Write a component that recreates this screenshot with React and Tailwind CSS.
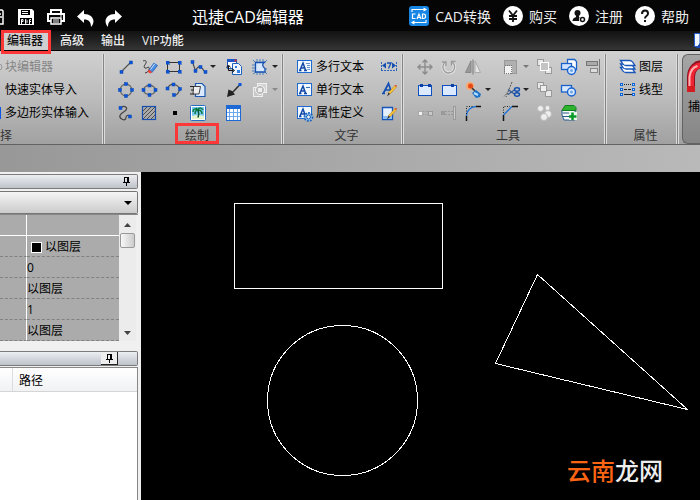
import React from 'react';

const BLUE = '#0a55d8';

function Icon({ children, crisp }) {
  return (
    <svg width="20" height="20" viewBox="0 0 20 20" fill="none" className="block shrink-0" shapeRendering={crisp ? 'crispEdges' : 'auto'} aria-hidden="true">
      {children}
    </svg>
  );
}

function Nodes({ at }) {
  return at.map(([x, y]) => (
    <rect key={`${x}-${y}`} x={x - 1.5} y={y - 1.5} width="3" height="3" fill={BLUE} stroke="#0846b8" strokeWidth=".5" />
  ));
}

function Caret({ color = '#222' }) {
  return (
    <svg width="6" height="3" viewBox="0 0 6 3" className="ml-0.5 block shrink-0" aria-hidden="true">
      <path d="M0 0h6L3 3z" fill={color} />
    </svg>
  );
}

/* ---------- draw group ---------- */
const LineIcon = () => (
  <Icon><path d="M5 15L15 5" stroke="#555" strokeWidth="1.3" /><Nodes at={[[5.5, 15], [15, 5.5]]} /></Icon>
);
const SketchIcon = () => (
  <Icon>
    <path d="M3 4c2-1 4 0 3 2s-3 4-1 5 3-2 4-.5-1 5-4 5.500" stroke="#333" strokeWidth="1" />
    <path d="M9 13l5-7 3.500 2.500-5.500 7z" fill="#4a8ce0" stroke="#1b58b8" strokeWidth=".7" />
    <path d="M9 12.500l3 2.500-1.500 1.500-3-1.500z" fill="#f04438" />
    <path d="M10.500 12.500l4.500-6" stroke="#cfe4ff" />
  </Icon>
);
const RectIcon = () => (
  <Icon crisp><path d="M3.500 5.500h12v9h-12z" stroke="#333" /><Nodes at={[[3.5, 5.5], [15.5, 5.5], [3.5, 14.5], [15.5, 14.5]]} /></Icon>
);
const PolyIcon = () => (
  <Icon><path d="M4.500 5l3 9q2-5 4.500-4t5 5" stroke="#444" strokeWidth="1.100" /><Nodes at={[[4.5, 5], [7.5, 14], [12.5, 10], [17.5, 15]]} /></Icon>
);
const BlockIcon = () => (
  <Icon>
    <rect x="3.500" y="2.500" width="9" height="9" fill="#fff" stroke="#1c56a8" /><rect x="3" y="2" width="10" height="3" fill="#1c56c8" />
    <rect x="10.500" y="2.500" width="2" height="2" fill="#e03030" />
    <path d="M8.500 6.500h6l3 3v8H8.500z" fill="#eef5ff" stroke="#1e62c0" />
    <path d="M11 9h2v2h-2zM13 13h3v3h-3z" fill="#357de0" />
    <path d="M4.500 9v4.500h5M2.500 10.500l2-2.500 2 2.500M8 11.500l2.500 2L8 15.500" stroke="#111" />
  </Icon>
);
const RegionIcon = () => (
  <Icon>
    <path d="M3 3l3 3m1-4v3m3-3v3m3-3v3m4-2l-3 3M2 8h3m-3 3h3m-3 3h3m-2 3l3-2m1 0v3m3-3v3m3-3v3m4-1l-3-3m0-2h3m-4-7h3" stroke="#2d6fc0" strokeWidth=".8" />
    <path d="M5.500 5.500H14q-3 3 1 6v3.500H5.500z" fill="#d8e8ff" stroke="#1450b0" strokeWidth="1.300" />
  </Icon>
);
const CircleIcon = () => (
  <Icon><circle cx="10" cy="10" r="5.800" stroke="#666" strokeWidth="1.300" /><Nodes at={[[10, 4], [4, 10], [16, 10], [10, 16]]} /></Icon>
);
const EllipseIcon = () => (
  <Icon><ellipse cx="9.500" cy="10" rx="6" ry="4.500" stroke="#666" strokeWidth="1.300" /><Nodes at={[[9.5, 5.5], [3.5, 10], [15.5, 10], [9.5, 15]]} /></Icon>
);
const ArcIcon = () => (
  <Icon><path d="M3.500 8.500C5 5 7 4 10 4.500s7 3 5 7-4 4-5 4" stroke="#555" strokeWidth="1.200" /><Nodes at={[[3.5, 8.5], [9.5, 4.5], [16, 9], [10, 15]]} /></Icon>
);
const PasteIcon = () => (
  <Icon>
    <path d="M7.500 3.500h6.500l3 3v10H7.500z" fill="#dceaff" stroke="#1b57b0" strokeWidth="1.200" />
    <path d="M5.500 6.500h7l-1.500 7.500H5z" fill="#eee" stroke="#444" /><path d="M2 6.500h4M3 10h3m-4 4h4" stroke="#222" />
  </Icon>
);
const ArrowIcon = () => (
  <Icon><path d="M16.500 4L7 14" stroke="#333" strokeWidth="1.600" /><path d="M3 17L4.500 9.500 8 11 11 14.500z" fill="#222" /><rect x="14.500" y="3" width="3" height="3" fill={BLUE} /></Icon>
);
const WipeIcon = () => (
  <Icon>
    <rect x="7.500" y="3.500" width="9" height="9" fill="#d4d4d4" stroke="#f0f0f0" /><rect x="3.500" y="7.500" width="9" height="9" fill="#c8c8c8" stroke="#eee" />
    <circle cx="10" cy="10" r="4.500" fill="#bbb" stroke="#f5f5f5" /><rect x="8" y="8" width="4" height="4" fill="#eee" />
  </Icon>
);
const SplineIcon = () => (
  <Icon><path d="M5 4.500c4-3 8 1 4 3.500s-7 5-4 7.500 5 1 5-1 2-3 4-1" stroke="#444" strokeWidth="1.200" /><Nodes at={[[4.500, 5], [14, 13.500]]} /></Icon>
);
const HatchIcon = () => (
  <Icon>
    <rect x="2.500" y="3.500" width="13" height="13" fill="#aaa" stroke="#174fb0" strokeWidth="1.200" />
    <path d="M3 8l4-4M3 12l8-8M3 16L15 4M7 16l8-8M11 16l4-4" stroke="#444" strokeWidth=".9" />
  </Icon>
);
const PointIcon = () => <Icon crisp><rect x="9" y="8" width="4" height="4" fill="#000" /></Icon>;
const ImageIcon = () => (
  <Icon>
    <rect x="2.500" y="2.500" width="15" height="15" rx="1" fill="#fff" stroke="#246cc4" />
    <rect x="4" y="4" width="12" height="12" fill="#79c8ef" /><path d="M4 13q6-2 12 0v3H4z" fill="#e6f2cc" />
    <path d="M10 7c-3-2-5-1-5 2m5-2c-2 0-3 2-3 4m3-4c1-3 4-2 5 0m-5 0c3 0 4 2 4 4m-4-4l-2-2" stroke="#087a42" strokeWidth="1.500" />
    <path d="M10 7q1.500 4 0 7.500" stroke="#07552f" strokeWidth="1.500" />
  </Icon>
);
const TableIcon = () => (
  <Icon crisp>
    <rect x="2" y="2" width="15" height="16" fill="#1c68d4" /><rect x="3" y="6" width="13" height="11" fill="#fff" />
    <path d="M5.500 6v11M9.500 6v11M13.500 6v11M3 9.500h13M3 13.500h13" stroke="#6fa8ea" />
  </Icon>
);

/* ---------- text group ---------- */
function TextFrame({ children }) {
  return (
    <Icon>
      <rect x="2.500" y="3.500" width="14" height="12" fill="#f2f8ff" stroke="#1f6ad0" />
      <path d="M5 13L8 6l2.500 7M6 11h4M4 13.500h2.500m2.500 0h3" stroke="#1148a8" strokeWidth="1.500" />
      {children}
    </Icon>
  );
}
const MTextIcon = () => <TextFrame><path d="M11 6.500h4M12 8.500h3M12 10.500h3M12.500 12.500h2.500" stroke="#6b93cc" /></TextFrame>;
const STextIcon = () => <TextFrame><path d="M11 7.500h4" stroke="#3b6cb8" /></TextFrame>;
const Gear = () => (
  <g stroke="#155fb8"><circle cx="13.500" cy="14" r="4" fill="#9cc4f2" strokeWidth="1.800" strokeDasharray="1.700 1.300" /><circle cx="13.500" cy="14" r="2" fill="#eee" /></g>
);
const AttrIcon = () => <TextFrame><Gear /></TextFrame>;
const DimIcon = () => (
  <Icon>
    <path d="M3 8.500L7 5.500v6zM17 8.500l-4-3v6z" fill="#174fb0" /><path d="M8 6h4L9.500 11.500" stroke="#174fb0" strokeWidth="1.300" />
    <path d="M2.500 5v9m15-9v9M2 13.500h16" stroke="#2f65b8" strokeDasharray="2 1" />
  </Icon>
);
const Brush = () => (
  <g><path d="M9.500 12.500L16 5.500l1.500 1.500-6.500 7z" fill="#ffc93e" stroke="#b87a10" strokeWidth=".6" /><path d="M9.500 12.500l1.500 1.500-3 2.500z" fill="#333" /><path d="M15.500 5.500l1.500 1.500 1-2z" fill="#d84020" /></g>
);
const StyleIcon = () => (
  <Icon><path d="M4.500 13l5-9.500 3 9M6.500 10h5M3 13.500h3" stroke="#1450b4" strokeWidth="1.700" /><Brush /></Icon>
);
const EditTextIcon = () => (
  <Icon><path d="M3.500 4.500h10v12h-10z" fill="#e4f0ff" stroke="#1554b8" strokeWidth="1.300" /><path d="M4 13h9v3H4z" fill="#8bbcf0" /><Brush /></Icon>
);

/* ---------- tools group ---------- */
const MoveIcon = () => (
  <Icon><path d="M10 3v14M3 10h14M7.500 5.500L10 3l2.500 2.500M7.500 14.500L10 17l2.500-2.500M5.500 7.500L3 10l2.500 2.500M14.500 7.500L17 10l-2.500 2.500" stroke="#8c8c8c" strokeWidth="1.400" /></Icon>
);
const RotateIcon = () => (
  <Icon>
    <path d="M5.500 6A6 6 0 0010 16a6 6 0 003.500-10.500" stroke="#e4e4e4" strokeWidth="3" />
    <path d="M5.500 6A6 6 0 0010 16a6 6 0 003.500-10.500M3 5h4v4M16.500 4.500h-4v4" stroke="#999" strokeWidth="1.300" />
  </Icon>
);
const MirrorIcon = () => (
  <Icon><path d="M8 4v11.500H2.500z" fill="#999" stroke="#888" /><path d="M12 4v11.500h5.500z" fill="#e4e4e4" stroke="#aaa" /><path d="M10 2.500v15" stroke="#777" /></Icon>
);
const ScaleIcon = () => (
  <Icon crisp><path d="M3.500 3.500h12v13h-12z" fill="#b0b0b0" stroke="#999" /><rect x="3.500" y="8.500" width="7" height="8" fill="#f2f2f2" stroke="#777" strokeDasharray="1 1" /></Icon>
);
const Squares = ({ top }) => (
  <Icon crisp>
    {[[2, 2], [10, 10]].map(([x, y]) => <rect key={x} x={x + 0.5} y={y + 0.5} width="6" height="6" fill="#e8e8e8" stroke="#999" />)}
    <rect x="5.500" y="5.500" width={top ? 8 : 6} height={top ? 8 : 6} fill={top ? '#c4c4c4' : '#eee'} stroke={top ? '#fff' : '#999'} />
  </Icon>
);
const GroupSquares = () => <Squares top />;
const PlainSquares = () => <Squares />;
const ShapesIcon = () => (
  <Icon>
    <path d="M8.500 2.500h7l2 2v8h-9z" fill="#fff" stroke="#1b61c8" strokeWidth="1.300" /><rect x="2.500" y="6.500" width="10" height="6" fill="#cfe3ff" stroke="#1b61c8" strokeWidth="1.300" />
    <circle cx="12.500" cy="13.500" r="4" fill="#d8e9ff" stroke="#1762d0" strokeWidth="1.400" /><circle cx="12.500" cy="13.500" r="1.500" fill="#6fa4e8" />
  </Icon>
);
const Shapes2Icon = () => (
  <Icon>
    <rect x="2.500" y="5.500" width="10" height="6.500" fill="#d8e8ff" stroke="#1b61c8" strokeWidth="1.300" />
    <circle cx="12.500" cy="12" r="4" fill="#d8e9ff" stroke="#1762d0" strokeWidth="1.400" /><circle cx="12.500" cy="12" r="1.500" fill="#6fa4e8" />
  </Icon>
);
const AlignIcon = () => (
  <Icon crisp><rect x="3.500" y="4.500" width="11" height="4" fill="#aaa" stroke="#777" /><rect x="7.500" y="11.500" width="7" height="4" fill="#ddd" stroke="#888" /><path d="M16.500 2v16" stroke="#777" /></Icon>
);
const ClipA = () => (
  <Icon crisp><rect x="3.500" y="5.500" width="13" height="10" fill="#dce9ff" stroke="#0e4fc0" /><path d="M5 4h3v3H5zM13 4h3v3h-3z" fill="#0b3fa8" /></Icon>
);
const ClipB = () => (
  <Icon crisp><rect x="3.500" y="5.500" width="14" height="10" fill="#dce9ff" stroke="#0e4fc0" /><path d="M12 4h3v3h-3z" fill="#0b3fa8" /></Icon>
);
const ExplodeIcon = () => (
  <Icon>
    <circle cx="7" cy="6" r="4" fill="#f8a870" /><circle cx="7.500" cy="6" r="2.500" fill="#e84a18" /><path d="M9 8l3 3" stroke="#333" strokeWidth="1.500" />
    <path d="M9 13l4-3 5 4-1 3-4 1z" fill="#1b72c8" /><path d="M11 13l4 2" stroke="#b8e0ff" strokeWidth="2" />
  </Icon>
);
const TrimIcon = () => (
  <Icon>
    <path d="M11 2L5 17" stroke="#555" strokeDasharray="2 1" /><path d="M7 9.500l7 5M7 14.500l7-5" stroke="#345a98" strokeWidth="1.300" />
    <path d="M3 16.500l4-5" stroke="#888" />
    <ellipse cx="16" cy="9.500" rx="2.500" ry="1.700" stroke="#1450b0" strokeWidth="1.400" /><ellipse cx="16" cy="14.500" rx="2.500" ry="1.700" stroke="#1450b0" strokeWidth="1.400" />
  </Icon>
);
const BreakIcon = () => (
  <Icon crisp><rect x="3" y="8" width="4" height="4" fill="#f0f0f0" stroke="#aaa" /><rect x="13" y="8" width="4" height="4" fill="#c8c8c8" stroke="#999" /><path d="M8 8.500h5m-5 3h5" stroke="#999" strokeDasharray="1 1" /></Icon>
);
const ExtendIcon = () => (
  <Icon crisp><rect x="2" y="8" width="4" height="4" fill="#999" /><path d="M6 8.500h8m-8 3h8" stroke="#999" strokeDasharray="2 1" /><rect x="14.500" y="3.500" width="2" height="13" fill="#ccc" stroke="#999" /></Icon>
);
const FilletIcon = () => (
  <Icon><path d="M3.500 18v-5M13 3.500h5" stroke="#111" strokeWidth="1.500" /><path d="M3.500 13C4 7 7 4 13 3.500" stroke="#2174d8" strokeWidth="1.300" /><path d="M3.500 11V3.500H11" stroke="#222" strokeDasharray="1 1.500" /></Icon>
);
const ChamferIcon = () => (
  <Icon><path d="M2.500 18v-6M11 3.500h6" stroke="#111" strokeWidth="1.500" /><path d="M2.500 12L11 3.500" stroke="#2174d8" strokeWidth="1.300" /><path d="M2.500 10V3.500H9" stroke="#222" strokeDasharray="1 1.500" /></Icon>
);
const CirclesIcon = () => (
  <Icon>{[[5.5, 5.5, 3], [12.5, 5, 2.5], [13, 11, 3.5], [9, 14, 3.5]].map(([x, y, r]) => <circle key={x} cx={x} cy={y} r={r} fill="#eee" stroke="#bbb" />)}</Icon>
);
const AddLayerIcon = () => (
  <Icon>
    <path d="M3 7h13v10H5q-3-5-2-10z" fill="#f4faf6" stroke="#285a8c" /><path d="M3 7.500l3-5h9l2 2v3z" fill="#2fb32f" stroke="#128020" /><path d="M3.500 10h12M4 13.500h6" stroke="#285a8c" />
    <path d="M10 9h8v8h-8z" fill="#e8f6ea" /><path d="M13.500 9.500v7.500m-3.500-3.500h7.500" stroke="#0a9a2c" strokeWidth="2.500" />
  </Icon>
);

/* ---------- properties group ---------- */
const LayersIcon = () => (
  <Icon>{[12.5, 9, 5.5].map((y) => <path key={y} d={`M2.500 ${y - 2}h9q2 0 3 1.500l2.500 3.500H8q-2 0-3-1.500z`} fill="#fff" stroke="#1856b8" strokeWidth="1.300" />)}</Icon>
);
const LineTypeIcon = () => (
  <Icon crisp>
    <path d="M6 4.500h8" stroke="#222" strokeDasharray="1 1" /><path d="M6 9.500h8" stroke="#222" strokeDasharray="3 1" /><path d="M6 14.500h8" stroke="#222" />
    {[4.5, 9.5, 14.5].map((y) => <g key={y} fill="#cfe8ff" stroke="#0c64d8"><rect x="2.500" y={y - 1} width="2" height="2" /><rect x="14.500" y={y - 1} width="2" height="2" /></g>)}
  </Icon>
);

const drawTools = [
  ['直线', LineIcon], ['草图', SketchIcon], ['矩形', RectIcon], ['多段线', PolyIcon, '#222'], ['块', BlockIcon], ['面域', RegionIcon, '#222'],
  ['圆', CircleIcon], ['椭圆', EllipseIcon], ['圆弧', ArcIcon], ['粘贴', PasteIcon], ['箭头', ArrowIcon], ['遮罩', WipeIcon, '#888'],
  ['样条', SplineIcon], ['填充', HatchIcon], ['点', PointIcon], ['图片', ImageIcon], ['表格', TableIcon],
];
const editTools = [
  ['移动', MoveIcon], ['旋转', RotateIcon], ['镜像', MirrorIcon], ['缩放', ScaleIcon, '#777'], ['编组', GroupSquares], ['合并', ShapesIcon], ['对齐', AlignIcon],
  ['剪切', ClipA], ['裁剪', ClipB], ['分解', ExplodeIcon, '#222'], ['修剪', TrimIcon, '#222'], ['解组', PlainSquares], ['相减', Shapes2Icon], null,
  ['打断', BreakIcon], ['延伸', ExtendIcon], ['圆角', FilletIcon], ['倒角', ChamferIcon], ['复制', CirclesIcon], ['添加图层', AddLayerIcon],
];

function ToolGrid({ tools, columns }) {
  return (
    <div className={`grid ${columns}`}>
      {tools.map((tool, i) => {
        if (!tool) return <span key={i} />;
        const [name, Glyph, caret] = tool;
        return (
          <button key={name} type="button" aria-label={name} className="flex h-[23px] items-center">
            <Glyph />
            {caret && <Caret color={caret} />}
          </button>
        );
      })}
    </div>
  );
}

function LabelButton({ Glyph, children }) {
  return (
    <button type="button" className="flex h-[23px] items-center gap-px whitespace-nowrap">
      <Glyph />
      {children}
    </button>
  );
}

function Group({ label, marked, width, pad, children }) {
  return (
    <section className={`flex shrink-0 ${width}`}>
      <div className="flex min-w-0 grow flex-col">
        <div className={`flex h-[72px] shrink-0 items-start pt-px ${pad}`}>{children}</div>
        <h2 className="h-[18px] pl-2 text-center leading-5 text-[#333]">
          <span className="relative inline-block px-2.5">
            {label}
            {marked && <span className="pointer-events-none absolute inset-x-0 -top-[3px] h-[21px] border-3 border-[#fb3737]" />}
          </span>
        </h2>
      </div>
      <div className="w-[3px] shrink-0 border-x border-[#dcdcdc] bg-[#858585]" />
    </section>
  );
}

function HeaderLink({ icon, children }) {
  return (
    <a href="#" className="flex items-center gap-1.5 whitespace-nowrap">
      <svg width="20" height="20" viewBox="0 0 20 20" fill="none" className="-mt-0.5" aria-hidden="true">{icon}</svg>
      {children}
    </a>
  );
}

function Header() {
  return (
    <header className="flex h-[31px] items-center overflow-hidden bg-[#050505] pt-0.5 text-sm leading-5 text-[#eee]">
      <div className="flex w-48 shrink-0 items-center">
        <button type="button" aria-label="保存" className="w-[18px]">
          <svg width="4" height="16" viewBox="0 0 4 16" fill="none" className="block" aria-hidden="true"><path d="M0 1h2l1 1v13H0M0 8h2M0 5h1" stroke="#fff" strokeWidth="1.500" /></svg>
        </button>
        <button type="button" aria-label="PDF" className="w-[29px]">
          <svg width="16" height="16" viewBox="0 0 16 16" className="block" aria-hidden="true">
            <path d="M0 0h14l2 2v14H0z" fill="#fff" /><path d="M3 1h9v5H3zM2 9h12v6H2z" fill="#000" /><path d="M4 2h6v1H4zM4 4h6v1H4z" fill="#fff" />
            <path d="M3.500 15v-4.500H5v2H3.500M7.500 10.500v4H8l1-1v-2l-1-1zM11.500 15v-4.500H13M11.500 12.500h1.500" fill="none" stroke="#fff" />
          </svg>
        </button>
        <button type="button" aria-label="打印" className="w-[30px]">
          <svg width="18" height="16" viewBox="0 0 18 16" fill="none" className="block" aria-hidden="true">
            <path d="M4 5V1h10v4M4 12H1V5h16v7h-3" stroke="#fff" strokeWidth="2" /><path d="M4 9h10v6H4z" fill="#000" stroke="#fff" strokeWidth="1.500" /><path d="M6 11h6M6 13h6M13 7h2" stroke="#fff" />
          </svg>
        </button>
        <button type="button" aria-label="撤销" className="w-7">
          <svg width="17" height="17" viewBox="0 0 17 17" className="mt-1 block" aria-hidden="true"><path d="M0 6.500L7 0v4c6 0 9 3 9.500 7 0 3-1.500 5-2.500 6 0-5-2-7.500-7-7.500V13z" fill="#fff" /></svg>
        </button>
        <button type="button" aria-label="重做">
          <svg width="17" height="17" viewBox="0 0 17 17" className="mt-1 block" aria-hidden="true"><path d="M17 6.500L10 0v4C4 4 1 7 .5 11c0 3 1.500 5 2.500 6 0-5 2-7.500 7-7.500V13z" fill="#fff" /></svg>
        </button>
      </div>
      <h1 className="whitespace-nowrap text-base leading-5 text-white">迅捷CAD编辑器</h1>
      <nav className="ml-auto flex items-center gap-3 pr-[11px]">
        <HeaderLink icon={<>
          <rect width="20" height="20" rx="3" fill="#1685e4" />
          <path d="M3 6V3.500h14M14.500 2L17 3.500 14.500 5M17 14v2.500H3M5.500 15L3 16.500 5.500 18" stroke="#fff" strokeWidth="1.100" />
          <path d="M6.500 8h-3v4.500h3M8 13l2-5 2 5M9 11.500h2M13.500 8v4.500h1.500l1.500-1V9L15 8z" stroke="#fff" strokeWidth="1.200" />
        </>}>CAD转换</HeaderLink>
        <HeaderLink icon={<><circle cx="10" cy="10" r="10" fill="#fff" /><path d="M6 4.500l4 5 4-5M10 9.500V16M6 10h8M6 13h8" stroke="#111" strokeWidth="1.800" /></>}>购买</HeaderLink>
        <HeaderLink icon={<>
          <circle cx="10" cy="10" r="10" fill="#fff" /><circle cx="8.500" cy="7" r="3" fill="#111" /><path d="M3.500 15q0-3 3.500-4V9h3v2l2 1v3z" fill="#111" />
          <circle cx="13.500" cy="13.500" r="3.500" fill="#fff" /><circle cx="13.500" cy="13.500" r="2" stroke="#111" strokeWidth="1.500" />
        </>}>注册</HeaderLink>
        <HeaderLink icon={<><circle cx="10" cy="10" r="10" fill="#fff" /><path d="M7 8q0-3.500 3-3.500T13 7.500q0 1.500-1.500 2.500T10 12.500M10 14v2" stroke="#111" strokeWidth="2" /></>}>帮助</HeaderLink>
      </nav>
    </header>
  );
}

function Tabs() {
  return (
    <nav className="flex h-5 items-stretch border-b border-black bg-linear-to-b from-[#121212] to-[#353535] font-medium text-[#eee]">
      <div className="relative flex w-[50px]">
        <button type="button" className="ml-0.5 grow bg-[#cfcfcf] pr-0.5 text-[#111]">编辑器</button>
        <span className="pointer-events-none absolute -top-px left-px z-10 h-6 w-[50px] border-3 border-[#fb3737]" />
      </div>
      <div className="flex grow gap-[17px] pl-2.5">
        <button type="button">高级</button>
        <button type="button">输出</button>
        <button type="button">VIP功能</button>
      </div>
      <button type="button" aria-label="窗口" className="w-1.5 overflow-hidden">
        <svg width="6" height="16" viewBox="0 0 6 16" className="block" aria-hidden="true"><path d="M.5.500H6v13H.5z" fill="#f2f6ff" stroke="#1d5ed0" /><path d="M2 15l4-5v5z" fill="#1848b0" /></svg>
      </button>
    </nav>
  );
}

function Ribbon() {
  return (
    <div className="flex h-[94px] overflow-hidden border-b border-[#626262] bg-linear-to-b from-[#d0d0d0] via-[#bcbcbc] to-[#a1a1a1] pt-[3px] text-black">
      <section className="flex w-[105px] shrink-0">
        <div className="min-w-0 grow">
          <div className="flex h-[72px] flex-col pt-px">
            <button type="button" disabled className="flex h-[23px] items-center gap-0.5 text-[#858585]">
              <svg width="3" height="12" viewBox="0 0 3 12" fill="none" aria-hidden="true"><circle cx="-1" cy="6" r="3" stroke="#999" /></svg>块编辑器
            </button>
            <button type="button" className="flex h-[23px] items-center pl-[5px]">快速实体导入</button>
            <button type="button" className="flex h-[23px] items-center gap-1"><span className="h-3 w-px bg-[#0a55e8]" />多边形实体输入</button>
          </div>
          <h2 className="h-[18px] leading-5 text-[#333]">择</h2>
        </div>
        <div className="w-[3px] shrink-0 border-x border-[#dcdcdc] bg-[#858585]" />
      </section>
      <Group label="绘制" marked width="w-[179px]" pad="pl-[11px]">
        <ToolGrid tools={drawTools} columns="grid-cols-[24px_24px_24px_36px_26px_28px]" />
      </Group>
      <Group label="文字" width="w-[120px]" pad="pl-[11px]">
        <div className="w-[84px]">
          <LabelButton Glyph={MTextIcon}>多行文本</LabelButton>
          <LabelButton Glyph={STextIcon}>单行文本</LabelButton>
          <LabelButton Glyph={AttrIcon}>属性定义</LabelButton>
        </div>
        <ToolGrid tools={[['调整', DimIcon], ['文字样式', StyleIcon], ['编辑文字', EditTextIcon]]} columns="grid-cols-1" />
      </Group>
      <Group label="工具" width="w-[203px]" pad="pl-[11px]">
        <ToolGrid tools={editTools} columns="grid-cols-[24px_24px_38px_34px_24px_24px_20px]" />
      </Group>
      <Group label="属性" width="w-[72px]" pad="pl-[11px]">
        <div>
          <LabelButton Glyph={LayersIcon}>图层</LabelButton>
          <LabelButton Glyph={LineTypeIcon}>线型</LabelButton>
        </div>
      </Group>
      <button type="button" className="ml-[3px] flex min-w-0 grow flex-col items-start overflow-hidden rounded-l-md border border-r-0 border-[#626262] bg-linear-to-b from-[#a5a5a5] to-[#858585] pl-1 text-black">
        <svg width="34" height="38" viewBox="0 0 34 38" fill="none" className="mt-1 block shrink-0" aria-hidden="true">
          <path d="M4 33V18C4 1 26 1 26 18v15" stroke="#8e1020" strokeWidth="8" /><path d="M4 32V18C4 2 26 2 26 18v14" stroke="#ee2434" strokeWidth="6" /><path d="M2.500 30V18q1-9 8-11" stroke="#ffb0b0" strokeWidth="2" /><path d="M0 27h8v6H0z" fill="#d51a20" />
        </svg>
        <span className="ml-px whitespace-nowrap leading-5">捕</span>
      </button>
    </div>
  );
}

function PanelTitle({ raised }) {
  return (
    <div className="flex h-[15px] items-center justify-end rounded-r-xs border border-l-0 border-[#7b7b7b] bg-linear-to-b from-[#eceef1] to-[#bec2ca]">
      <button type="button" aria-label="固定面板" className={raised ? 'mr-[19px] flex h-[13px] w-[17px] items-center justify-center border-r border-b border-[#222] bg-[#eee]' : 'mr-0.5 flex h-[13px] w-[17px] items-center justify-center'}>
        <svg width="7" height="9" viewBox="0 0 7 9" fill="none" shapeRendering="crispEdges" aria-hidden="true"><path d="M1.500 5V.5h4V5M4.500 0v5M0 5.500h7M3.500 6v3" stroke="#000" /></svg>
      </button>
    </div>
  );
}

function Sidebar() {
  const values = ['layer', '0', '以图层', '1', '以图层'];
  return (
    <aside className="flex w-[141px] shrink-0 flex-col bg-[#f0f0f0] pt-0.5 pr-[3px] text-black">
      <PanelTitle />
      <div className="relative mt-0.5">
        <select aria-label="对象" className="block h-[23px] w-full appearance-none rounded-r-xs border border-l-0 border-[#777] bg-linear-to-b from-[#f5f5f5] to-[#ccc]"><option></option></select>
        <svg width="8" height="4" viewBox="0 0 8 4" className="pointer-events-none absolute top-2.5 right-1.5" aria-hidden="true"><path d="M0 0h8L4 4z" fill="#000" /></svg>
      </div>
      <div className="flex border-t border-[#888]">
        <table className="min-w-0 grow table-fixed border-separate border-spacing-0 bg-[#ababab]">
          <tbody>
            <tr><td className="h-[21px] w-[27px] border-r border-b border-white p-0" /><td className="border-b border-white p-0" /></tr>
            {values.map((value, i) => (
              <tr key={i}>
                <td className="h-[21px] border-r border-b border-r-white border-b-[#818181] [border-bottom-style:dashed] p-0" />
                <td className="border-b border-dashed border-[#818181] px-0 pt-0.5 pb-0 leading-[18px]">
                  {value === 'layer'
                    ? <span className="flex items-center gap-[3px] pl-1"><span className="size-[11px] border border-white bg-black" />以图层</span>
                    : value}
                </td>
              </tr>
            ))}
          </tbody>
        </table>
        <div className="mr-0.5 flex w-[17px] shrink-0 flex-col items-center bg-[#ececec]">
          <svg width="7" height="4" viewBox="0 0 7 4" className="mt-2" aria-hidden="true"><path d="M0 4l3.500-4L7 4z" fill="#444" /></svg>
          <div className="mt-1.5 h-[15px] w-[15px] rounded-xs border border-[#999] bg-linear-to-r from-[#f8f8f8] to-[#ccc]" />
          <svg width="7" height="4" viewBox="0 0 7 4" className="mt-auto mb-1.5" aria-hidden="true"><path d="M0 0h7L3.500 4z" fill="#444" /></svg>
        </div>
      </div>
      <div className="mt-2.5"><PanelTitle raised /></div>
      <div className="mt-px grow border-t border-r border-[#888] bg-white">
        <div className="flex h-6 items-center border-b border-[#d5d5d5] bg-linear-to-b from-white to-[#f1f2f4]">
          <span className="h-full w-[13px] border-r border-[#ddd]" />
          <span className="pt-0.5 pl-1.5">路径</span>
        </div>
      </div>
    </aside>
  );
}

export default function App() {
  return (
    <div className="flex h-screen flex-col overflow-hidden bg-black font-['Open_Sans','Noto_Sans_CJK_SC',sans-serif] text-xs leading-4">
      <Header />
      <Tabs />
      <Ribbon />
      <div className="h-[27px] shrink-0 bg-linear-to-r from-[#989898] to-[#b9b9b9]" />
      <div className="flex min-h-0 grow">
        <Sidebar />
        <main className="relative min-w-0 grow overflow-hidden bg-black">
          <svg width="559" height="328" viewBox="0 0 559 328" fill="none" stroke="#fff" shapeRendering="crispEdges" className="block" role="img" aria-label="绘图区">
            <rect x="93.500" y="31.500" width="208" height="85" />
            <circle cx="201.500" cy="228.500" r="75" />
            <path d="M396.500 102.500L354.500 191.500 546.500 237.500z" />
          </svg>
          <p className="absolute right-[37px] bottom-[13px] text-2xl leading-8 font-medium text-[#eee]"><span className="text-[#fb6412]">云南</span>龙网</p>
        </main>
      </div>
    </div>
  );
}
